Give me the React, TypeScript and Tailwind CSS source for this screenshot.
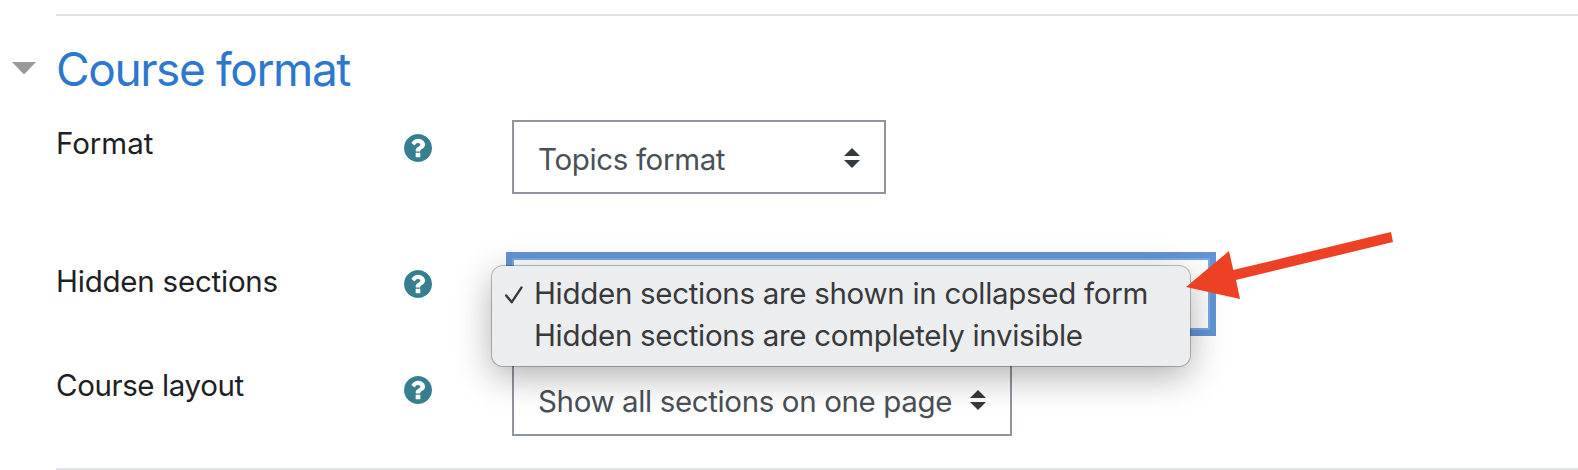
import React from 'react';

interface FormRowProps {
  label: string;
  className: string;
  labelClass: string;
  helpClass: string;
  children: React.ReactNode;
}

const HelpIcon = ({ className }: { className: string }) => (
  <svg viewBox="128 128 1536 1536" className={`w-7 h-7 shrink-0 fill-[#357f90] ${className}`}>
    <path d="M1024 1376v-192q0-14-9-23t-23-9h-192q-14 0-23 9t-9 23v192q0 14 9 23t23 9h192q14 0 23-9t9-23zm256-672q0-88-55.5-163t-138.5-116-170-41q-243 0-371 213-15 24 8 42l132 100q7 6 19 6 16 0 25-12 53-68 86-92 34-24 86-24 48 0 85.5 26t37.5 59q0 38-20 61t-68 45q-63 28-115.5 86.5t-52.5 125.5v36q0 14 9 23t23 9h192q14 0 23-9t9-23q0-19 21.5-49.5t54.5-49.5q32-18 49-28.5t46-35 44.5-48 28-60.5 12.5-81zm384 192q0 209-103 385.5t-279.5 279.5-385.5 103-385.5-103-279.5-279.5-103-385.5 103-385.5 279.5-279.5 385.5-103 385.5 103 279.5 279.5 103 385.5z" />
  </svg>
);

const SelectArrows = () => (
  <svg viewBox="0 0 16 20" className="w-4 h-5 mt-0.5 shrink-0 fill-[#343a40]">
    <path d="M8 0l8 8H0zM0 12h16l-8 8z" />
  </svg>
);

const FormRow: React.FC<FormRowProps> = ({ label, className, labelClass, helpClass, children }) => (
  <div className={`flex items-start pl-14 ${className}`}>
    <div className="w-[456px] shrink-0 flex items-start">
      <label className={`w-[348px] shrink-0 text-[29.5px] leading-9 text-[#1d2125] whitespace-nowrap mt-[5px] ${labelClass}`}>
        {label}
      </label>
      <HelpIcon className={helpClass} />
    </div>
    {children}
  </div>
);

export default function App() {
  return (
    <div className="w-full h-[470px] overflow-hidden bg-white pt-3.5 font-['Inter',sans-serif]">
      <hr className="ml-14 border-t-2 border-[#dee2e6]" />

      {/* Section heading */}
      <div className="flex items-start h-[104px] pt-[25px] pl-3">
        <svg viewBox="0 0 24 12" className="w-6 h-3 mt-[21px] shrink-0 fill-[#999]">
          <path d="M0 0h24L13 11.5q-1 .8-2 0z" />
        </svg>
        <h3 className="ml-5 text-[46px] leading-[56px] text-[#2d78cd] whitespace-nowrap tracking-[-1.4px]">
          Course format
        </h3>
      </div>

      <FormRow label="Format" className="h-[138px]" labelClass="tracking-[-0.05px]" helpClass="mt-3.5">
        <div className="w-[374px] h-[74px] border-2 border-[#8f959e] flex items-center justify-between pl-6 pr-6">
          <span className="text-[29.5px] leading-9 tracking-[-0.35px] text-[#495057] whitespace-nowrap mt-1">Topics format</span>
          <SelectArrows />
        </div>
      </FormRow>

      <FormRow label="Hidden sections" className="h-[104px]" labelClass="tracking-[-0.22px]" helpClass="mt-3">
        <div className="relative">
          <div className="w-[698px] h-[72px] border-2 border-[#72aae8] outline-[6.5px] outline-[#6394d5] bg-white" />

          {/* Open option list */}
          <ul className="absolute left-[-20px] top-[7.5px] z-10 w-[698px] h-[100px] pt-1.5 rounded-[11px] bg-[#ecedef] ring-1 ring-black/25 shadow-[0_10px_36px_rgba(0,0,0,0.32)] text-[29.5px] leading-[42px] tracking-[-0.3px] text-[#38393b] whitespace-nowrap">
            <li className="flex items-center">
              <svg viewBox="0 0 18 18" className="w-[18px] h-[18px] mt-1 ml-[13px] mr-[11px] shrink-0 fill-none stroke-[#38393b] stroke-[2.4]" strokeLinecap="round" strokeLinejoin="round">
                <path d="M1.2 9.4l5.6 6.8L16.6 1.4" />
              </svg>
              <span>Hidden sections are shown in collapsed form</span>
            </li>
            <li className="pl-[42px]">Hidden sections are completely invisible</li>
          </ul>

          {/* Pointer */}
          <svg viewBox="0 0 210 70" className="absolute left-[673px] top-[-28px] z-20 w-[210px] h-[70px] fill-[#ec4125]">
            <path d="M1 57L44 21l4.3 19L206 2l2 10L51 50l4 19z" />
          </svg>
        </div>
      </FormRow>

      <FormRow label="Course layout" className="h-[106px]" labelClass="tracking-[-0.4px]" helpClass="mt-3.5">
        <div className="w-[500px] h-[74px] border-2 border-[#8f959e] flex items-center justify-between px-6">
          <span className="text-[29.5px] leading-9 tracking-[-0.37px] text-[#495057] whitespace-nowrap mt-1">Show all sections on one page</span>
          <SelectArrows />
        </div>
      </FormRow>

      <hr className="ml-14 border-t-2 border-[#dee2e6]" />
    </div>
  );
}
